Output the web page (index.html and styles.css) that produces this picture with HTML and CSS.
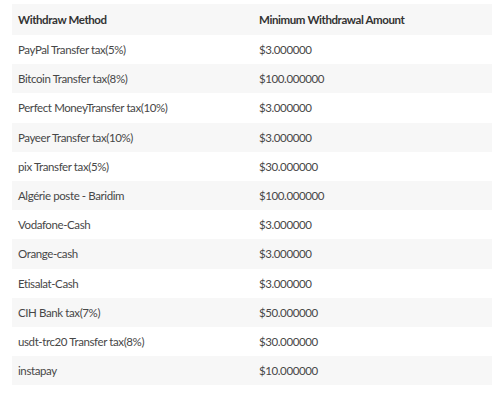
FILE: index.html
```html
<!DOCTYPE html>
<html>
<head>
<meta charset="utf-8">
<link rel="stylesheet" href="styles.css">
</head>
<body>
<table class="methods">
  <thead>
    <tr><th>Withdraw Method</th><th>Minimum Withdrawal Amount</th></tr>
  </thead>
  <tbody>
    <tr><td>PayPal Transfer tax(5%)</td><td>$3.000000</td></tr>
    <tr><td>Bitcoin Transfer tax(8%)</td><td>$100.000000</td></tr>
    <tr><td>Perfect MoneyTransfer tax(10%)</td><td>$3.000000</td></tr>
    <tr><td>Payeer Transfer tax(10%)</td><td>$3.000000</td></tr>
    <tr><td>pix Transfer tax(5%)</td><td>$30.000000</td></tr>
    <tr><td>Algérie poste - Baridim</td><td>$100.000000</td></tr>
    <tr><td>Vodafone-Cash</td><td>$3.000000</td></tr>
    <tr><td>Orange-cash</td><td>$3.000000</td></tr>
    <tr><td>Etisalat-Cash</td><td>$3.000000</td></tr>
    <tr><td>CIH Bank tax(7%)</td><td>$50.000000</td></tr>
    <tr><td>usdt-trc20 Transfer tax(8%)</td><td>$30.000000</td></tr>
    <tr><td>instapay</td><td>$10.000000</td></tr>
  </tbody>
</table>
</body>
</html>
```
FILE: styles.css
```css
html, body {
  margin: 0;
  padding: 0;
  background: #ffffff;
}
body {
  padding: 4px 8px 0 12px;
  font-family: Lato, "Open Sans", sans-serif;
  font-size: 11.5px;
  letter-spacing: -0.4px;
  color: #474747;
}
.methods {
  width: 480px;
  border-collapse: collapse;
}
.methods th,
.methods td {
  text-align: left;
  padding: 0 6px;
  vertical-align: middle;
}
.methods th {
  height: 31px;
  font-weight: 700;
  color: #333333;
  background: #f7f7f7;
}
.methods th:first-child,
.methods td:first-child {
  width: 229px;
}
.methods td {
  height: 29.2px;
}
.methods tbody tr:nth-child(even) td {
  background: #f7f7f7;
}
```
